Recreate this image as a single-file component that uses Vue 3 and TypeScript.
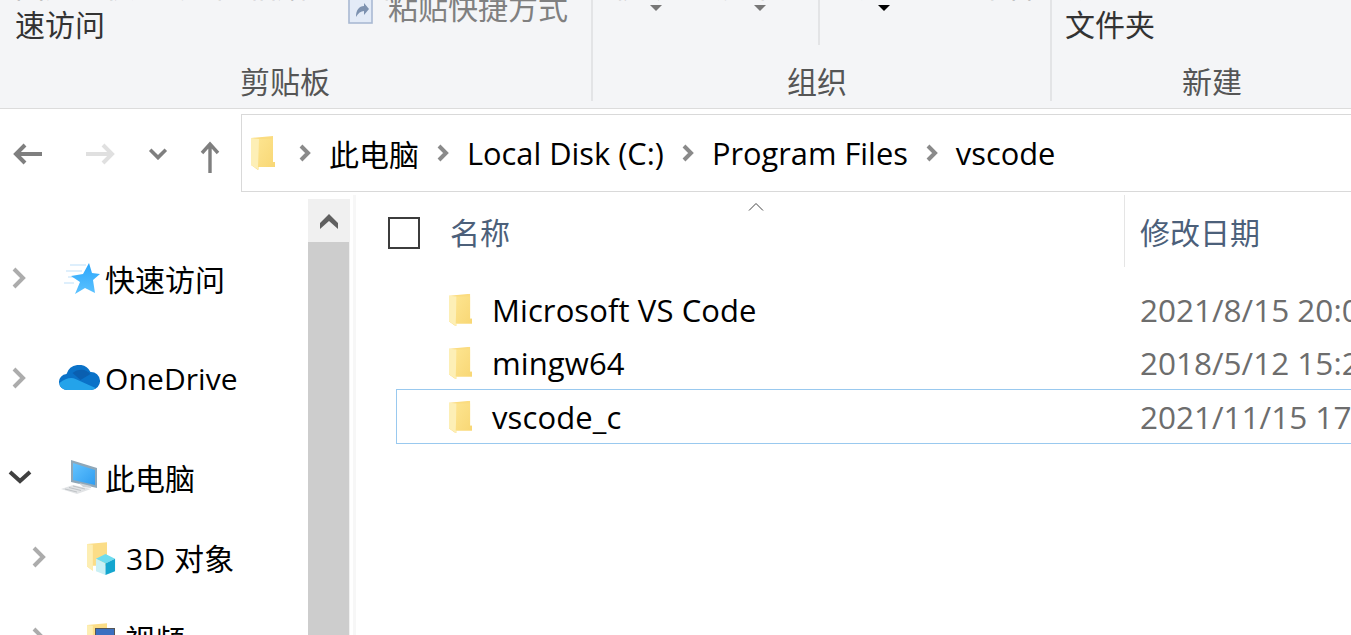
<script setup lang="ts">
interface Row { name: string; date: string; focused?: boolean }
interface Crumb { text: string; cjk?: boolean }
const rows: Row[] = [
  { name: 'Microsoft VS Code', date: '2021/8/15 20:05' },
  { name: 'mingw64', date: '2018/5/12 15:22' },
  { name: 'vscode_c', date: '2021/11/15 17:30', focused: true },
]
const crumbs: Crumb[] = [
  { text: '此电脑', cjk: true },
  { text: 'Local Disk (C:)' },
  { text: 'Program Files' },
  { text: 'vscode' },
]
</script>

<template>
  <div class="window">
    <header class="ribbon">
      <section class="group clip">
        <div class="top">
          <div class="col c1"><div class="frag">固定到快</div><div class="label">速访问</div></div>
          <div class="col c2"><div class="frag">复制 粘贴</div></div>
          <div class="col c3">
            <div class="frag">复制路径</div>
            <div class="short">
              <svg class="shortcut" viewBox="0 0 25 29"><rect x="1" y="0" width="23" height="28" fill="#e3ebf7" stroke="#a9b9d2" stroke-width="1.600"/><path d="M8 22c0-7 3-11 8-11V8l5 6-5 6v-4c-3 0-6 2-8 6z" fill="#7d92b0"/></svg>
              <span class="muted">粘贴快捷方式</span>
            </div>
          </div>
        </div>
        <div class="gname g1">剪贴板</div>
      </section>
      <section class="group clip2">
        <div class="top split">
          <div class="sub s1">
            <div class="frag f-move">移动到</div>
            <div class="frag f-copy">复制到</div>
            <i class="tri grey t1"></i><i class="tri grey t2"></i>
          </div>
          <div class="sub s2">
            <div class="frag f-del">删除</div>
            <div class="frag f-ren">重命名</div>
            <i class="tri black"></i>
          </div>
        </div>
        <div class="gname g2">组织</div>
      </section>
      <section class="group clip3">
        <div class="top"><div class="col c4"><div class="frag">新建</div><div class="label">文件夹</div></div></div>
        <div class="gname g3">新建</div>
      </section>
    </header>

    <nav class="navbar">
      <div class="navbtns">
        <svg class="back" viewBox="0 0 32 24"><path d="M31 12H5M14 3l-9 9 9 9" fill="none" stroke="#7f7f7f" stroke-width="4"/></svg>
        <svg class="fwd" viewBox="0 0 32 24"><path d="M1 12h26M18 3l9 9-9 9" fill="none" stroke="#e0e0e0" stroke-width="4"/></svg>
        <svg class="down" viewBox="0 0 16 10"><path d="M1.500 1.500 8 8l6.500-6.500" fill="none" stroke="#7f7f7f" stroke-width="3"/></svg>
        <svg class="up" viewBox="0 0 20 32"><path d="M10 32V4M2 12l8-9 8 9" fill="none" stroke="#7f7f7f" stroke-width="3.400"/></svg>
      </div>
      <div class="address">
        <svg class="folder addr-folder" viewBox="0 0 24 34"><use href="#yellow-folder" /></svg>
        <template v-for="c in crumbs" :key="c.text">
          <svg class="crumb-arrow" viewBox="0 0 13 18"><path d="M3 2l7 7-7 7" fill="none" stroke="#8a8a8a" stroke-width="4"/></svg>
          <span class="crumb" :class="{ cjk: c.cjk }">{{ c.text }}</span>
        </template>
      </div>
    </nav>

    <svg width="0" height="0" class="defs">
      <defs>
        <linearGradient id="fg" x1="0" x2="1" y1="0" y2="1"><stop offset="0" stop-color="#fde48f"/><stop offset="1" stop-color="#f8d775"/></linearGradient>
        <linearGradient id="sg" x1="0" x2="0" y1="0" y2="1"><stop offset="0" stop-color="#2aa6fb"/><stop offset="1" stop-color="#5cc2ff"/></linearGradient>
        <linearGradient id="mg" x1="0" x2="1" y1="0" y2="1"><stop offset="0" stop-color="#63c3ff"/><stop offset="1" stop-color="#2f9df0"/></linearGradient>
        <symbol id="yellow-folder" viewBox="0 0 24 34">
          <path d="M0 2 22 0v26l2 0v5H7V34L0 29z" fill="#fbdc80"/>
          <path d="M0 2 8 3V34L0 29z" fill="#fdefb6"/>
          <path d="M8 3h14v23h2v5H7z" fill="url(#fg)"/>
        </symbol>
      </defs>
    </svg>

    <main class="body">
      <aside class="tree">
        <div class="tree-list">
          <div class="node n1">
            <svg class="chev" viewBox="0 0 16 24"><path d="M3 3l9 9-9 9" fill="none" stroke="#acacac" stroke-width="4"/></svg>
            <svg class="ico star" viewBox="0 0 36 31">
              <path d="M6 2h16M2 8h16M4 14h8M0 20h10" stroke="#d4eafb" stroke-width="1.400"/>
              <path d="M25 0l3 10 8 1-7 6 2 13-10-5-10 6 5-12-9-6 12-2z" fill="url(#sg)"/>
            </svg>
            <span>快速访问</span>
          </div>
          <div class="node n2">
            <svg class="chev" viewBox="0 0 16 24"><path d="M3 3l9 9-9 9" fill="none" stroke="#acacac" stroke-width="4"/></svg>
            <svg class="ico cloud" viewBox="0 0 40 26">
              <path d="M8 25a8 8 0 0 1-1-16 13 13 0 0 1 24-2 9 9 0 0 1 1 18z" fill="#0a72c8"/>
              <path d="M13 8a13 13 0 0 1 18 1l-10 6z" fill="#0a5fb0"/>
              <path d="M8 25c-4 0-8-3-8-7 6-5 12-6 16-4l20 9c-1 1-3 2-5 2z" fill="#24a3ea"/>
            </svg>
            <span class="latin">OneDrive</span>
          </div>
          <div class="node n3">
            <svg class="chev open" viewBox="0 0 26 16"><path d="M3 3l10 9 10-9" fill="none" stroke="#404040" stroke-width="4"/></svg>
            <svg class="ico pc" viewBox="0 0 36 34">
              <path d="M10 0l26 8v20L10 22z" fill="#8fa7b8"/>
              <path d="M12 3l22 7v15l-22-5z" fill="url(#mg)"/>
              <path d="M18 23l12 3v2l-8-1z" fill="#cfd4d8"/>
              <path d="M0 29l12-4 18 4-14 5z" fill="#e2e4e6"/>
              <path d="M4 29l12 3M8 27.500l12 3M12 26l12 3" stroke="#bfc3c6" stroke-width="1"/>
            </svg>
            <span>此电脑</span>
          </div>
          <div class="node n4">
            <svg class="chev" viewBox="0 0 16 24"><path d="M3 3l9 9-9 9" fill="none" stroke="#acacac" stroke-width="4"/></svg>
            <span class="ico-stack">
              <svg class="folder tree-folder" viewBox="0 0 24 34"><path d="M0 2 24 0v28H7v6L0 29z" fill="#fbdd87"/><path d="M0 2 7 3v31L0 29z" fill="#fdeeb3"/></svg>
              <svg class="cube" viewBox="0 0 22 22"><path d="M11 0l10 5-10 5L1 5z" fill="#6ddcef"/><path d="M1 5l10 5v12L1 18z" fill="#c9f0f5"/><path d="M21 5l-10 5v12l10-4z" fill="#14a6cf"/></svg>
            </span>
            <span class="wide">3D 对象</span>
          </div>
          <div class="node n5">
            <svg class="chev" viewBox="0 0 16 24"><path d="M3 3l9 9-9 9" fill="none" stroke="#acacac" stroke-width="4"/></svg>
            <span class="ico-stack">
              <svg class="folder tree-folder" viewBox="0 0 24 34"><path d="M0 2 24 0v28H7v6L0 29z" fill="#fbdd87"/><path d="M0 2 7 3v31L0 29z" fill="#fdeeb3"/></svg>
              <i class="film"></i>
            </span>
            <span>视频</span>
          </div>
        </div>
        <div class="scrollbar">
          <div class="sb-btn"><svg viewBox="0 0 18 16"><path d="M0 16V10L9 1l9 9v6L9 8z" fill="#606060"/></svg></div>
          <div class="sb-thumb"></div>
        </div>
      </aside>

      <section class="files">
        <svg class="sort" viewBox="0 0 16 8"><path d="M1 7.500l7-7 7 7" fill="none" stroke="#444" stroke-width="1"/></svg>
        <div class="head">
          <span class="check"></span>
          <span class="h-name">名称</span>
          <span class="h-date">修改日期</span>
        </div>
        <div class="rows">
          <div v-for="r in rows" :key="r.name" class="row" :class="{ focused: r.focused }">
            <svg class="folder row-folder" viewBox="0 0 24 34"><use href="#yellow-folder" /></svg>
            <span class="fname">{{ r.name }}</span>
            <span class="fdate">{{ r.date }}</span>
          </div>
        </div>
      </section>
    </main>
  </div>
</template>

<style>
html, body { margin: 0; overflow: hidden; background: #fff; }
</style>

<style scoped>
.window {
  width: 1351px; height: 635px; overflow: hidden; background: #fff; display: flex; flex-direction: column;
  font-family: "Open Sans", "Noto Sans CJK SC", sans-serif; font-size: 30px; color: #000;
}
.defs { position: absolute; }
.ribbon { height: 109px; box-sizing: border-box; flex: none; display: flex; background: #f4f5f7; border-bottom: 1px solid #dcdcdc; overflow: hidden; font-family: "Noto Sans CJK SC", sans-serif; }
.group { position: relative; display: flex; flex-direction: column; height: 101px; border-right: 2px solid #e3e4e6; box-sizing: border-box; }
.clip { width: 593px; }
.clip2 { width: 459px; }
.clip3 { flex: 1; border-right: 0; }
.top { height: 61px; display: flex; }
.gname { height: 38px; line-height: 38px; font-size: 30px; color: #555; white-space: nowrap; }
.g1 { padding-left: 240px; }
.g2 { padding-left: 194px; }
.g3 { padding-left: 130px; }
.col { display: flex; flex-direction: column; }
.frag { height: 2px; overflow: hidden; display: flex; align-items: flex-end; line-height: 36px; color: #999; white-space: nowrap; font-size: 30px; flex: none; }
.label { font-size: 30px; line-height: 44px; margin-top: -1px; color: #333; }
.c1 { margin-left: 15px; width: 165px; }
.c2 { width: 167px; }
.short { display: flex; align-items: flex-start; margin-top: -7px; gap: 15px; margin-left: 1px; }
.shortcut { width: 25px; height: 29px; flex: none; margin-top: 0; }
.muted { color: #808080; line-height: 34px; margin-top: -6px; white-space: nowrap; }
.split { display: flex; }
.sub { position: relative; }
.s1 { width: 225px; height: 45px; border-right: 2px solid #e3e4e6; }
.s2 { flex: 1; }
.f-move, .f-copy, .f-del, .f-ren { position: absolute; top: 0; }
.f-move { left: 20px; }
.f-copy { left: 130px; }
.f-del { left: 30px; }
.f-ren { left: 125px; }
.tri { position: absolute; top: 5px; width: 0; height: 0; border-left: 6px solid transparent; border-right: 6px solid transparent; border-top: 6px solid #777; }
.t1 { left: 57px; }
.t2 { left: 161px; }
.black { left: 58px; border-top-color: #000; }
.c4 { margin-left: 13px; }
.navbar { height: 86px; flex: none; display: flex; align-items: stretch; }
.navbtns { width: 241px; flex: none; position: relative; display: flex; align-items: center; box-sizing: border-box; padding: 4px 0 0 11px; }
.back { width: 32px; height: 24px; }
.fwd { width: 32px; height: 24px; margin-left: 42px; }
.down { width: 20px; height: 12px; margin-left: 31px; }
.up { width: 22px; height: 32px; margin-left: 31px; margin-top: 6px; }
.address { flex: 1; margin: 5px 0 3px; border: 1px solid #d9d9d9; border-right: 0; display: flex; align-items: center; box-sizing: border-box; padding-left: 9px; }
.folder { display: block; }
.addr-folder { width: 24px; height: 34px; margin-right: 23px; }
.crumb-arrow { width: 13px; height: 18px; flex: none; margin: 0 18px 0 0; }
.crumb { margin-right: 17px; white-space: nowrap; font-size: 30.800px; }
.crumb.cjk { font-size: 30px; }
.body { flex: 1; display: flex; min-height: 0; }
.tree { width: 350px; flex: none; display: flex; position: relative; }
.tree-list { width: 308px; flex: none; }
.node { display: flex; align-items: center; height: 40px; white-space: nowrap; position: relative; }
.n1 { margin-top: 63px; }
.n2 { margin-top: 60px; }
.n3 { margin-top: 59px; }
.n4 { margin-top: 40px; }
.n5 { margin-top: 41px; }
.chev { width: 16px; height: 24px; margin-left: 11px; flex: none; }
.chev.open { width: 26px; height: 16px; margin-left: 7px; }
.n4 .chev, .n5 .chev { margin-left: 31px; }
.ico { flex: none; }
.star { width: 36px; height: 31px; margin: 0 5px 0 37px; }
.cloud { width: 41px; height: 26px; margin: 0 5px 0 32px; }
.pc { width: 36px; height: 34px; margin: 0 8px 0 28px; }
.latin { letter-spacing: 0.1px; }
.wide { letter-spacing: 0.4px; }
.ico-stack { position: relative; width: 30px; height: 36px; margin: 0 9px 0 40px; flex: none; }
.tree-folder { width: 20px; height: 35px; }
.cube { position: absolute; left: 8px; top: 15px; width: 21px; height: 21px; }
.film { position: absolute; left: 8px; top: 8px; width: 20px; height: 14px; background: #3a6fc0; border: 1px solid #555; box-sizing: border-box; }
.n5 span:last-child { margin-left: -1px; }
.scrollbar { width: 42px; flex: none; margin-top: 4px; display: flex; flex-direction: column; background: #f0f0f0; }
.sb-btn { height: 43px; display: flex; align-items: center; justify-content: center; }
.sb-btn svg { width: 18px; height: 16px; }
.sb-thumb { flex: 1; background: #cdcdcd; margin-right: 1px; }
.files { flex: 1; position: relative; min-width: 0; margin-left: 3px; border-left: 3px solid #f7f7f7; }
.sort { position: absolute; left: 392px; top: 8px; width: 16px; height: 8px; }
.head { height: 72px; position: relative; }
.check { position: absolute; left: 32px; top: 22px; width: 32px; height: 32px; border: 2px solid #3c3c3c; box-sizing: border-box; }
.h-name { position: absolute; left: 94px; top: 15px; color: #4c607a; line-height: 46px; }
.h-date { position: absolute; left: 768px; top: 0; height: 72px; line-height: 76px; color: #4c607a; border-left: 1px solid #e5e5e5; padding-left: 15px; }
.rows { padding-top: 16px; }
.row { height: 53px; display: flex; align-items: center; margin-left: 40px; box-sizing: border-box; white-space: nowrap; }
.row.focused { height: 55px; border: 1px solid #99c9ef; border-right: 0; }
.row-folder { width: 23px; height: 34px; flex: none; margin-left: 53px; }
.row.focused .row-folder { margin-left: 52px; }
.fname { margin-left: 20px; width: 648px; flex: none; font-size: 31px; letter-spacing: 0.1px; }
.fdate { color: #6d6d6d; font-size: 31.500px; }
</style>
